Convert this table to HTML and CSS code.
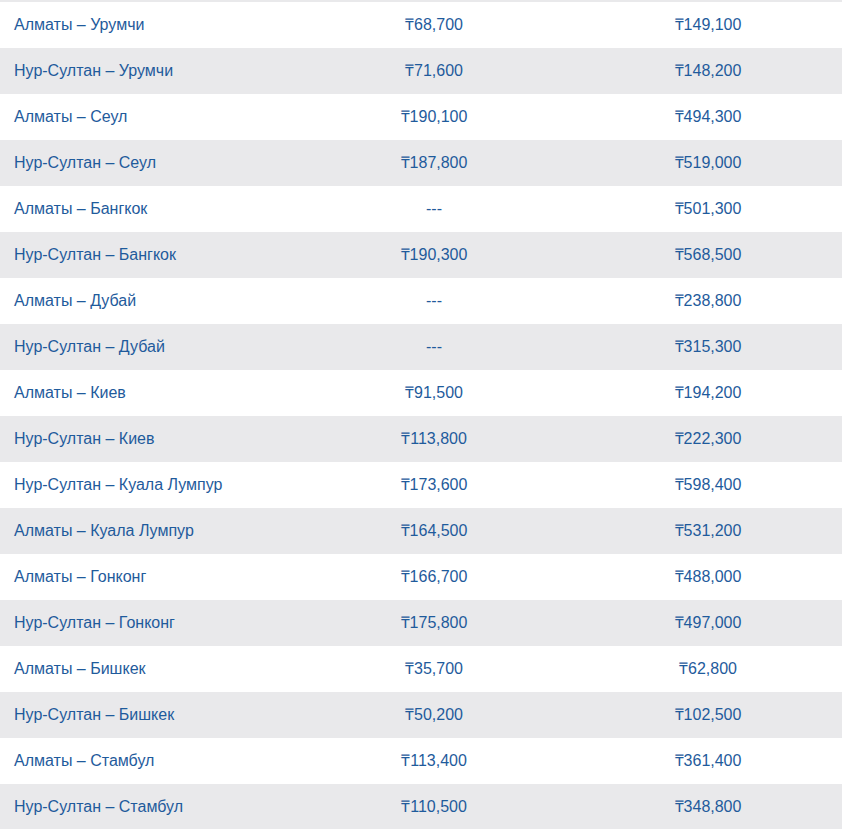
FILE: index.html
```html
<!DOCTYPE html>
<html lang="ru">
<head>
<meta charset="utf-8">
<link rel="stylesheet" href="styles.css">
</head>
<body>
<div class="table">
  <div class="row"><div class="route">Алматы – Урумчи</div><div class="price">₸68,700</div><div class="price">₸149,100</div></div>
  <div class="row"><div class="route">Нур-Султан – Урумчи</div><div class="price">₸71,600</div><div class="price">₸148,200</div></div>
  <div class="row"><div class="route">Алматы – Сеул</div><div class="price">₸190,100</div><div class="price">₸494,300</div></div>
  <div class="row"><div class="route">Нур-Султан – Сеул</div><div class="price">₸187,800</div><div class="price">₸519,000</div></div>
  <div class="row"><div class="route">Алматы – Бангкок</div><div class="price">---</div><div class="price">₸501,300</div></div>
  <div class="row"><div class="route">Нур-Султан – Бангкок</div><div class="price">₸190,300</div><div class="price">₸568,500</div></div>
  <div class="row"><div class="route">Алматы – Дубай</div><div class="price">---</div><div class="price">₸238,800</div></div>
  <div class="row"><div class="route">Нур-Султан – Дубай</div><div class="price">---</div><div class="price">₸315,300</div></div>
  <div class="row"><div class="route">Алматы – Киев</div><div class="price">₸91,500</div><div class="price">₸194,200</div></div>
  <div class="row"><div class="route">Нур-Султан – Киев</div><div class="price">₸113,800</div><div class="price">₸222,300</div></div>
  <div class="row"><div class="route">Нур-Султан – Куала Лумпур</div><div class="price">₸173,600</div><div class="price">₸598,400</div></div>
  <div class="row"><div class="route">Алматы – Куала Лумпур</div><div class="price">₸164,500</div><div class="price">₸531,200</div></div>
  <div class="row"><div class="route">Алматы – Гонконг</div><div class="price">₸166,700</div><div class="price">₸488,000</div></div>
  <div class="row"><div class="route">Нур-Султан – Гонконг</div><div class="price">₸175,800</div><div class="price">₸497,000</div></div>
  <div class="row"><div class="route">Алматы – Бишкек</div><div class="price">₸35,700</div><div class="price">₸62,800</div></div>
  <div class="row"><div class="route">Нур-Султан – Бишкек</div><div class="price">₸50,200</div><div class="price">₸102,500</div></div>
  <div class="row"><div class="route">Алматы – Стамбул</div><div class="price">₸113,400</div><div class="price">₸361,400</div></div>
  <div class="row"><div class="route">Нур-Султан – Стамбул</div><div class="price">₸110,500</div><div class="price">₸348,800</div></div>
</div>
</body>
</html>
```

FILE: styles.css
```css
html, body {
  margin: 0;
  padding: 0;
  background: #ffffff;
}
.table {
  border-top: 2px solid #e9e9eb;
  font-family: "Liberation Sans", Arial, sans-serif;
  font-size: 16px;
  color: #1f5b9c;
}
.row {
  display: grid;
  grid-template-columns: 294px 280px 268px;
  height: 46px;
  line-height: 46px;
}
.row:nth-child(even) {
  background: #e9e9eb;
}
.route {
  padding-left: 14px;
}
.price {
  text-align: center;
}
```
